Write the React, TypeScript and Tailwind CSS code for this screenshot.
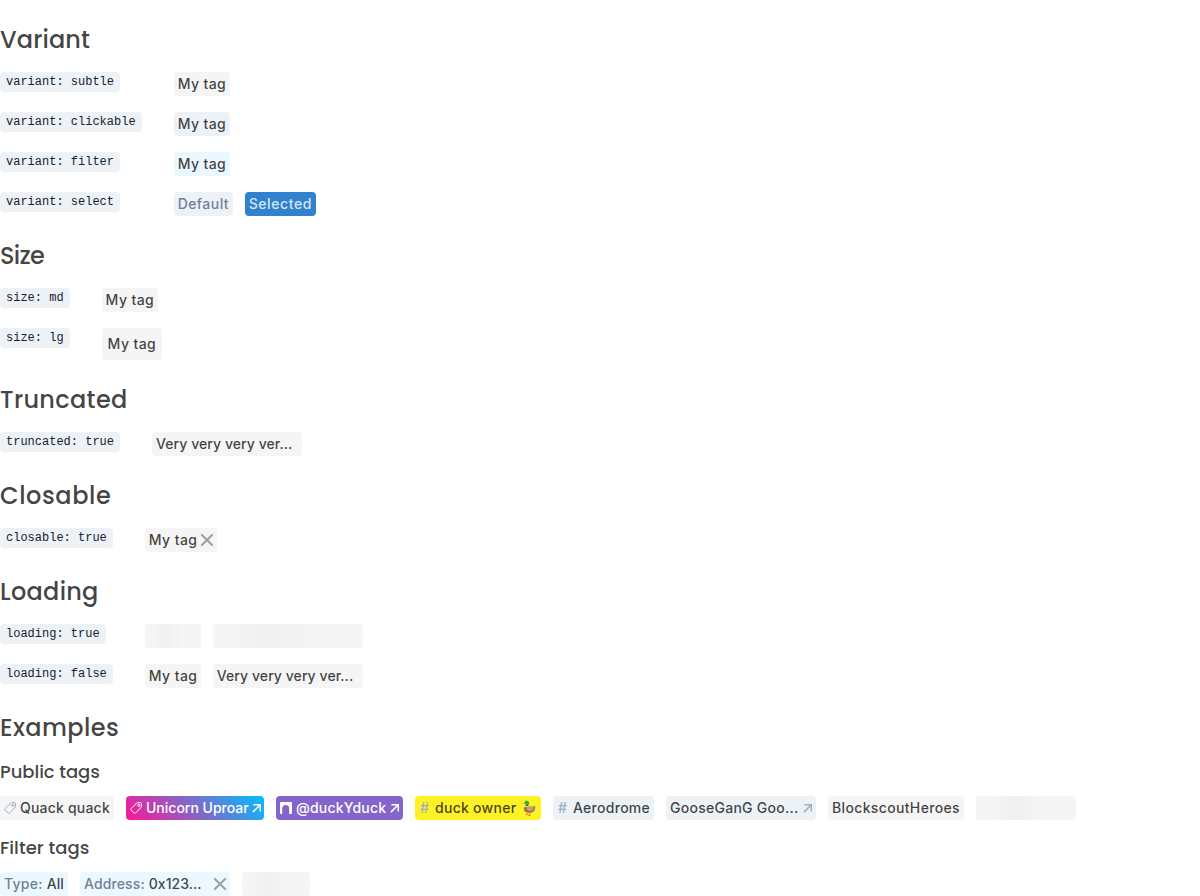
import React from "react";

const TagIcon = ({ className }: { className: string }) => (
  <svg viewBox="0 0 12 12" className={`h-3 w-3 shrink-0 ${className}`} fill="none" stroke="currentColor" strokeWidth="1">
    <path d="M7.4.7 10.5.6q1 0 1 1L11.3 4.9q0 .4-.3.7L5.4 11q-.6.6-1.2 0L1 7.9q-.6-.6 0-1.2L6.7 1Q7 .7 7.4.7Z" />
    <circle cx="8.8" cy="3.3" r="1.1" />
  </svg>
);

const Arrow = ({ className }: { className: string }) => (
  <svg viewBox="0 0 12 12" className={`h-3 w-3 shrink-0 ${className}`} fill="none" stroke="currentColor" strokeWidth="1.5">
    <path d="M4.4 2.7h6.9v6.8M11.3 2.7 3.9 10.1" />
  </svg>
);

const Close = ({ className }: { className: string }) => (
  <svg viewBox="0 0 20 20" className={`h-5 w-5 shrink-0 ${className}`} fill="none" stroke="currentColor" strokeWidth="2.1" strokeLinecap="round">
    <path d="m4.9 4.9 10.2 10.2M15.1 4.9 4.9 15.1" />
  </svg>
);

const Arch = () => (
  <svg viewBox="0 0 12 12" className="h-3 w-3 shrink-0" fill="currentColor">
    <path d="M1 0h10a1 1 0 0 1 1 1v10a1 1 0 0 1-1 1H9.2V6.6a3.5 3.5 0 0 0-7 0V12H1a1 1 0 0 1-1-1V1a1 1 0 0 1 1-1Z" />
  </svg>
);

type TagProps = { children?: React.ReactNode; className?: string };

const Tag = ({ children, className = "" }: TagProps) => (
  <span className={`flex h-6 items-center rounded-[4px] px-1 text-sm leading-5 font-medium whitespace-nowrap ${className}`}>
    {children}
  </span>
);

const MyTag = ({ className = "w-14 bg-[#f5f5f5]" }: { className?: string }) => (
  <Tag className={`tracking-[0.4px] ${className}`}>My tag</Tag>
);

const LongTag = () => <Tag className="w-[150px] bg-[#f5f5f5] tracking-[0.07px]">Very very very ver...</Tag>;

const Hash = () => <span className="w-3 shrink-0 pl-px text-[#a0aec0]">#</span>;

const Skeleton = ({ className }: { className: string }) => (
  <span
    className={`h-6 rounded-[4px] bg-linear-to-r from-[#f5f5f5] from-12% via-[#f0f0f0] via-38% to-[#f5f5f5] to-70% ${className}`}
  />
);

const Heading = ({ children, className }: { children: string; className: string }) => (
  <h2 className={`mt-6 mb-4 flex h-8 items-center font-[Poppins,Inter,sans-serif] text-2xl leading-8 font-medium whitespace-nowrap ${className}`}>
    {children}
  </h2>
);

const Subheading = ({ children, className }: { children: string; className: string }) => (
  <h3 className={`flex h-6 items-center font-[Poppins,Inter,sans-serif] text-lg leading-6 font-medium ${className}`}>{children}</h3>
);

const Rows = ({ items }: { items: [string, React.ReactNode][] }) => (
  <div className="grid grid-cols-[max-content_1fr] items-start gap-x-8 gap-y-4">
    {items.map(([label, content]) => (
      <React.Fragment key={label}>
        <div className="flex">
          <code className="h-5 rounded-[4px] bg-[#edf2f7] px-1.5 font-['Liberation_Mono',monospace] text-xs leading-[21px] text-[#1a202c]">
            {label}
          </code>
        </div>
        <div className="flex gap-3">{content}</div>
      </React.Fragment>
    ))}
  </div>
);

export default function App() {
  return (
    <main className="h-[896px] overflow-hidden bg-white font-['Inter',sans-serif] text-[#101112]/80">
      <Heading className="tracking-[0.1px]">Variant</Heading>
      <Rows
        items={[
          ["variant: subtle", <MyTag />],
          ["variant: clickable", <MyTag className="w-14 bg-[#edf2f7]" />],
          ["variant: filter", <MyTag className="w-14 bg-[#ebf8ff]" />],
          [
            "variant: select",
            <>
              <Tag className="w-[59px] bg-[#edf2f7] tracking-[0.45px] text-[#718096]">Default</Tag>
              <Tag className="w-[71px] bg-[#3182ce] tracking-[0.6px] text-[#d6e6f5]">Selected</Tag>
            </>,
          ],
        ]}
      />
      <Heading className="tracking-[-0.7px]">Size</Heading>
      <Rows
        items={[
          ["size: md", <MyTag />],
          ["size: lg", <MyTag className="h-8! w-[60px] bg-[#f5f5f5] px-1.5!" />],
        ]}
      />
      <Heading className="tracking-[0.34px]">Truncated</Heading>
      <Rows items={[["truncated: true", <LongTag />]]} />
      <Heading className="tracking-[0.58px]">Closable</Heading>
      <Rows
        items={[
          [
            "closable: true",
            <Tag className="w-[72px] justify-between bg-[#f5f5f5] pr-0! tracking-[0.4px]">
              My tag
              <Close className="text-[#a0a0a0]" />
            </Tag>,
          ],
        ]}
      />
      <Heading className="tracking-[0.28px]">Loading</Heading>
      <Rows
        items={[
          [
            "loading: true",
            <>
              <Skeleton className="w-14" />
              <Skeleton className="w-[150px]" />
            </>,
          ],
          [
            "loading: false",
            <>
              <MyTag />
              <LongTag />
            </>,
          ],
        ]}
      />
      <Heading className="tracking-[0.4px]">Examples</Heading>
      <Subheading className="tracking-[-0.05px]">Public tags</Subheading>
      <div className="mt-3 flex gap-3">
        <Tag className="w-[114px] gap-1 bg-[#f5f5f5] tracking-[0.2px]">
          <TagIcon className="text-[#a0aec0]" />
          Quack quack
        </Tag>
        <Tag className="w-[138px] bg-linear-[45deg,#ff1493_0%,#00bfff_100%] text-white">
          <TagIcon className="mr-1 text-white" />
          Unicorn Uproar
          <Arrow className="ml-auto text-white" />
        </Tag>
        <Tag className="w-[127px] bg-[#8465cb] tracking-[0.2px] text-white">
          <Arch />
          <span className="ml-1">@duckYduck</span>
          <Arrow className="ml-auto text-white" />
        </Tag>
        <Tag className="w-[126px] gap-1 bg-[#fff224] tracking-[0.28px]">
          <Hash />
          duck owner 🦆
        </Tag>
        <Tag className="w-[101px] gap-1 bg-[#edf2f7] tracking-[0.28px]">
          <Hash />
          Aerodrome
        </Tag>
        <Tag className="w-[150px] justify-between bg-[#edf2f7] tracking-[0.26px]">
          GooseGanG Goo...
          <Arrow className="text-[#a0aec0]" />
        </Tag>
        <Tag className="w-[136px] bg-[#f5f5f5] tracking-[0.35px]">BlockscoutHeroes</Tag>
        <Skeleton className="w-[100px]" />
      </div>
      <Subheading className="mt-4 tracking-[0.05px]">Filter tags</Subheading>
      <div className="mt-3 flex gap-3">
        <Tag className="w-[68px] gap-1 bg-[#ebf8ff]">
          <span className="tracking-[0.25px] text-[#718096]">Type:</span>All
        </Tag>
        <Tag className="w-[150px] gap-1 bg-[#ebf8ff] pr-0!">
          <span className="tracking-[0.12px] text-[#718096]">Address:</span>
          <span className="tracking-[0.05px]">0x123...</span>
          <Close className="ml-auto text-[#a0a0a0]" />
        </Tag>
        <Skeleton className="w-[68px]" />
      </div>
    </main>
  );
}
